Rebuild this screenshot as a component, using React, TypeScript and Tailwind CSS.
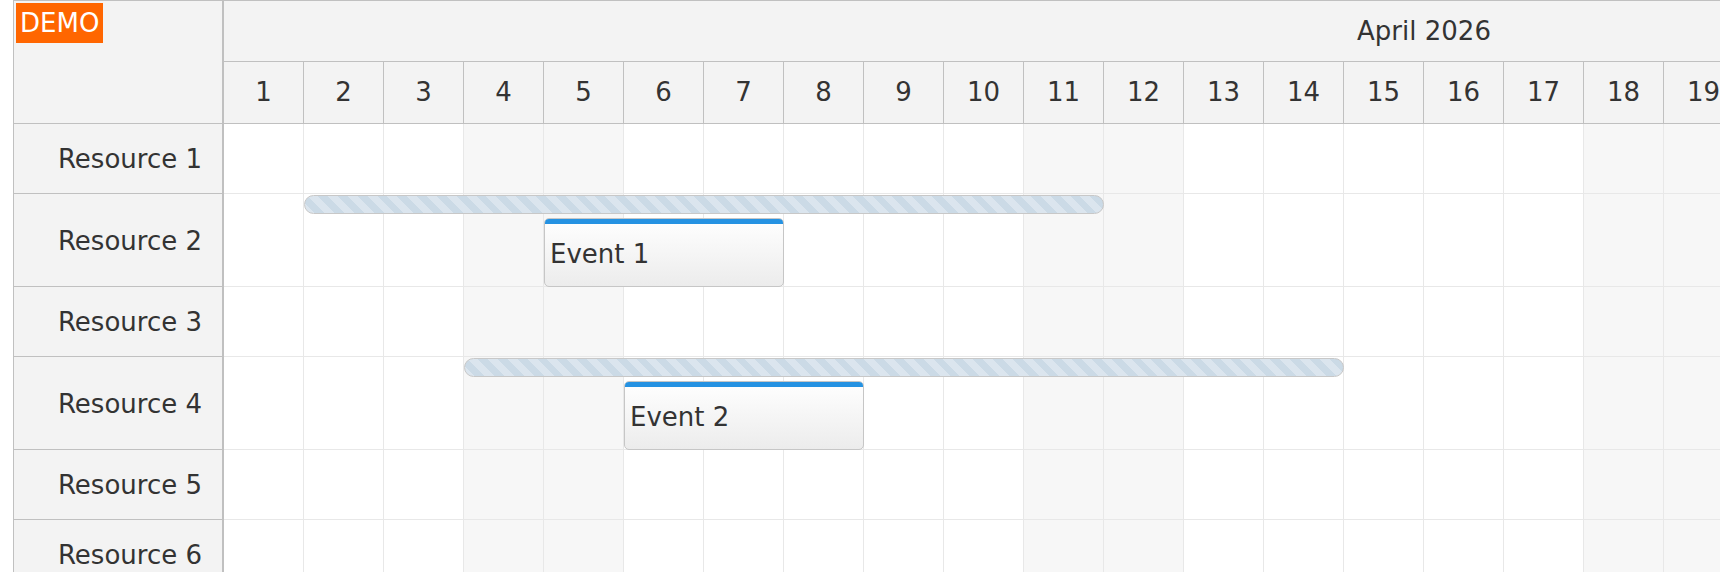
import React from 'react'

const DAYS = Array.from({ length: 30 }, (_, i) => i + 1)
const WEEKENDS = [4, 5, 11, 12, 18, 19, 25, 26]

interface Row {
  name: string
  tall: boolean
  bar?: { start: number; days: number }
  event?: { text: string; start: number; days: number }
}

const rows: Row[] = [
  { name: 'Resource 1', tall: false },
  { name: 'Resource 2', tall: true, bar: { start: 2, days: 10 }, event: { text: 'Event 1', start: 5, days: 3 } },
  { name: 'Resource 3', tall: false },
  { name: 'Resource 4', tall: true, bar: { start: 4, days: 11 }, event: { text: 'Event 2', start: 6, days: 3 } },
  { name: 'Resource 5', tall: false },
  { name: 'Resource 6', tall: false },
]

const CELL = 80

export default function App() {
  return (
    <div className="h-[572px] w-[1720px] overflow-hidden bg-white font-['DejaVu_Sans',sans-serif] text-[26px] text-[#333]">
      <div className="relative ml-[13px] flex border-l border-t border-[#c0c0c0]">
        {/* row headers */}
        <div className="w-[210px] shrink-0 border-r-2 border-[#c0c0c0] bg-[#f3f3f3]">
          <div className="h-[123px] border-b border-[#c0c0c0]" />
          {rows.map((row) => (
            <div
              key={row.name}
              className={`flex items-center justify-end border-b border-[#c0c0c0] pr-[20px] pt-[2px] ${row.tall ? 'h-[93px]' : 'h-[70px]'}`}
            >
              {row.name}
            </div>
          ))}
        </div>

        {/* timeline */}
        <div className="min-w-0 flex-1 overflow-hidden">
          <div className="w-[2400px]">
            <div className="flex h-[61px] items-center justify-center border-b border-[#c0c0c0] bg-[#f3f3f3]">
              April 2026
            </div>
            <div className="flex h-[62px] border-b border-[#c0c0c0] bg-[#f3f3f3]">
              {DAYS.map((d) => (
                <div key={d} className="flex w-[80px] shrink-0 items-center justify-center border-r border-[#c0c0c0]">
                  {d}
                </div>
              ))}
            </div>

            {rows.map((row) => (
              <div
                key={row.name}
                className={`relative flex border-b border-[#e8e8e8] ${row.tall ? 'h-[93px]' : 'h-[70px]'}`}
              >
                {DAYS.map((d) => (
                  <div
                    key={d}
                    className={`w-[80px] shrink-0 border-r border-[#e8e8e8] ${WEEKENDS.includes(d) ? 'bg-[#f7f7f7]' : 'bg-white'}`}
                  />
                ))}

                {row.bar && (
                  <div
                    className="absolute top-[1px] h-[19px] rounded-full border border-[#c8c8c8] bg-[repeating-linear-gradient(45deg,#dbe5ee_0,#dbe5ee_7px,#cbdae6_7px,#cbdae6_14px)]"
                    style={{ left: (row.bar.start - 1) * CELL, width: row.bar.days * CELL }}
                  />
                )}

                {row.event && (
                  <div
                    className="absolute top-[24px] bottom-[-1px] flex flex-col overflow-hidden rounded-[5px] border border-[#c6c6c6] bg-linear-to-b from-white to-[#ececec]"
                    style={{ left: (row.event.start - 1) * CELL, width: row.event.days * CELL }}
                  >
                    <div className="-mx-px -mt-px h-[6px] shrink-0 bg-[#2592e2]" />
                    <div className="flex flex-1 items-center pb-[2px] pl-[5px]">{row.event.text}</div>
                  </div>
                )}
              </div>
            ))}
          </div>
        </div>

        <div className="absolute left-[2px] top-[2px] flex h-[40px] items-center bg-[#ff6600] px-[4px] text-white">
          DEMO
        </div>
      </div>
    </div>
  )
}
